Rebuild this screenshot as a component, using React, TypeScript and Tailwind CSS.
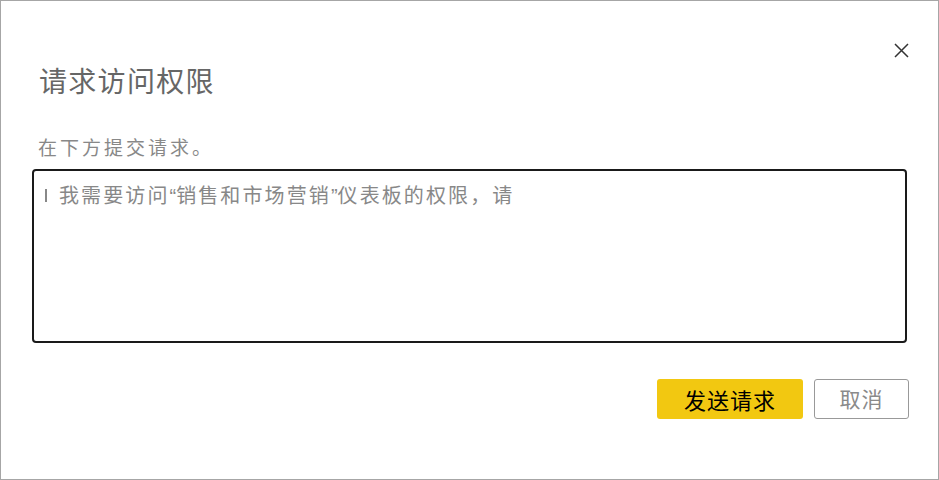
import { useState } from "react";

const font = { fontFamily: '"Noto Sans CJK SC", "Noto Sans", sans-serif' };

const Quote = ({ c }: { c: string }) => (
  <span className="font-['Liberation_Sans'] tracking-[0px]">{c}</span>
);

export default function App() {
  const [dashboard] = useState("销售和市场营销");

  return (
    <div style={font} className="w-[939px] h-[480px] bg-white border border-[#a6a6a6] flex flex-col">
      <div className="flex justify-end pt-[41px] pr-[29px]">
        <button className="w-[16px] h-[16px] flex items-center justify-center text-[#333]">
          <svg width="15" height="15" viewBox="0 0 15 15" fill="none" stroke="currentColor" strokeWidth="1.5">
            <path d="M1 1L14 14M14 1L1 14" />
          </svg>
        </button>
      </div>
      <h1 className="ml-[38px] mt-[4px] text-[28px] leading-[36px] text-[#666] font-normal tracking-[1.3px]">请求访问权限</h1>
      <p className="ml-[37px] mt-[36px] text-[19px] leading-[26px] text-[#888] tracking-[3px]">在下方提交请求。</p>
      <div className="mx-[31px] mt-[9px] h-[174px] border-2 border-[#1a1a1a] rounded-[4px] pl-[11px] pt-[10px]">
        <div className="flex items-center text-[20px] leading-[28px] text-[#888] tracking-[2.1px]">
          <span className="w-[2px] h-[13px] bg-[#888] mr-[12px]" />
          <span>
            我需要访问<Quote c="“" />
            {dashboard}
            <Quote c="”" />
            仪表板的权限，请
          </span>
        </div>
      </div>
      <div className="flex justify-end gap-[11px] mt-[36px] mr-[29px]">
        <button className="w-[146px] h-[40px] rounded-[3px] bg-[#f2c811] text-[22px] text-black tracking-[1px]">发送请求</button>
        <button className="w-[95px] h-[40px] rounded-[3px] border border-[#999] bg-white text-[21px] text-[#8a8a8a] tracking-[1px]">取消</button>
      </div>
    </div>
  );
}
